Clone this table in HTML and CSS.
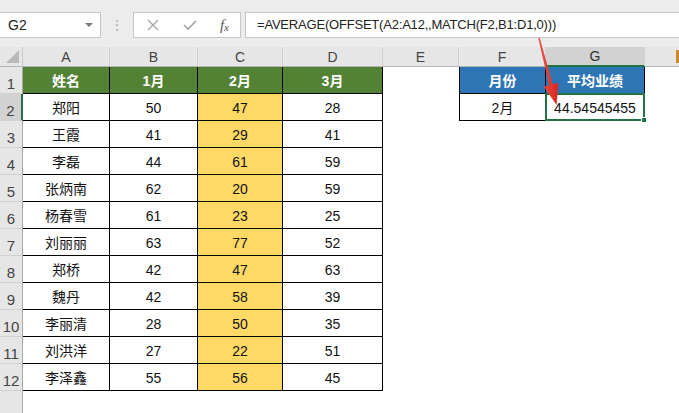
FILE: index.html
```html
<!DOCTYPE html>
<html lang="zh">
<head>
<meta charset="utf-8">
<title>Excel</title>
<link rel="stylesheet" href="styles.css">
</head>
<body>
<div class="app">
  <div class="fbar">
    <div class="namebox"><span>G2</span><span class="dd"></span></div>
    <div class="dots">⋮</div>
    <div class="btns">
      <svg class="ico" width="14" height="14" viewBox="0 0 14 14"><path d="M2 2 L12 12 M12 2 L2 12" stroke="#a6a6a6" stroke-width="1.4" fill="none"/></svg>
      <svg class="ico" width="16" height="14" viewBox="0 0 16 14"><path d="M2 7 L6 11 L14 3" stroke="#a6a6a6" stroke-width="1.6" fill="none"/></svg>
      <span class="fx">f<sub>x</sub></span>
    </div>
    <div class="formula">=AVERAGE(OFFSET(A2:A12,,MATCH(F2,B1:D1,0)))</div>
  </div>
  <div class="sheet">
    <div class="corner"><span class="tri"></span></div>
    <div class="ch">A</div><div class="ch">B</div><div class="ch">C</div><div class="ch">D</div><div class="ch">E</div><div class="ch">F</div><div class="ch chsel">G</div><div class="ch chlast"></div>

    <div class="rh">1</div>
    <div class="t g">姓名</div><div class="t g">1月</div><div class="t g">2月</div><div class="t g">3月</div>
    <div class="c"></div><div class="t tl b">月份</div><div class="t b">平均业绩</div><div class="c"></div>

    <div class="rh rhsel">2</div>
    <div class="t">郑阳</div><div class="t">50</div><div class="t y">47</div><div class="t">28</div>
    <div class="c"></div><div class="t tl">2月</div><div class="t sel">44.54545455<span class="handle"></span></div><div class="c"></div>

    <div class="rh">3</div>
    <div class="t">王霞</div><div class="t">41</div><div class="t y">29</div><div class="t">41</div>
    <div class="c"></div><div class="c"></div><div class="c"></div><div class="c"></div>

    <div class="rh">4</div>
    <div class="t">李磊</div><div class="t">44</div><div class="t y">61</div><div class="t">59</div>
    <div class="c"></div><div class="c"></div><div class="c"></div><div class="c"></div>

    <div class="rh">5</div>
    <div class="t">张炳南</div><div class="t">62</div><div class="t y">20</div><div class="t">59</div>
    <div class="c"></div><div class="c"></div><div class="c"></div><div class="c"></div>

    <div class="rh">6</div>
    <div class="t">杨春雪</div><div class="t">61</div><div class="t y">23</div><div class="t">25</div>
    <div class="c"></div><div class="c"></div><div class="c"></div><div class="c"></div>

    <div class="rh">7</div>
    <div class="t">刘丽丽</div><div class="t">63</div><div class="t y">77</div><div class="t">52</div>
    <div class="c"></div><div class="c"></div><div class="c"></div><div class="c"></div>

    <div class="rh">8</div>
    <div class="t">郑桥</div><div class="t">42</div><div class="t y">47</div><div class="t">63</div>
    <div class="c"></div><div class="c"></div><div class="c"></div><div class="c"></div>

    <div class="rh">9</div>
    <div class="t">魏丹</div><div class="t">42</div><div class="t y">58</div><div class="t">39</div>
    <div class="c"></div><div class="c"></div><div class="c"></div><div class="c"></div>

    <div class="rh">10</div>
    <div class="t">李丽清</div><div class="t">28</div><div class="t y">50</div><div class="t">35</div>
    <div class="c"></div><div class="c"></div><div class="c"></div><div class="c"></div>

    <div class="rh">11</div>
    <div class="t">刘洪洋</div><div class="t">27</div><div class="t y">22</div><div class="t">51</div>
    <div class="c"></div><div class="c"></div><div class="c"></div><div class="c"></div>

    <div class="rh">12</div>
    <div class="t">李泽鑫</div><div class="t">55</div><div class="t y">56</div><div class="t">45</div>
    <div class="c"></div><div class="c"></div><div class="c"></div><div class="c"></div>

    <div class="rh"></div>
    <div class="c"></div><div class="c"></div><div class="c"></div><div class="c"></div>
    <div class="c"></div><div class="c"></div><div class="c"></div><div class="c"></div>
  </div>
  <span class="hmark"></span>
  <svg class="arrow" width="679" height="413" viewBox="0 0 679 413">
    <defs>
      <linearGradient id="rg" x1="0" y1="0" x2="1" y2="0">
        <stop offset="0" stop-color="#f2524a"/>
        <stop offset="1" stop-color="#d8271f"/>
      </linearGradient>
    </defs>
    <polygon points="538.2,38 539.8,38 552.6,84.2 558.4,82.8 556.6,105 543.6,86.6 549.2,85.2" fill="url(#rg)"/>
  </svg>
</div>
</body>
</html>
```

FILE: styles.css
```css
* { box-sizing: border-box; }
html, body { margin: 0; padding: 0; }
body {
  width: 679px;
  height: 413px;
  overflow: hidden;
  background: #fff;
  font-family: "Liberation Sans", "Noto Sans CJK SC", sans-serif;
}
.app {
  position: relative;
  width: 679px;
  height: 413px;
  overflow: hidden;
}
.fbar {
  height: 47px;
  background: #ececec;
  display: flex;
  align-items: flex-start;
  padding-top: 12px;
}
.namebox {
  width: 101px;
  height: 26px;
  background: #fff;
  border: 1px solid #c6c6c6;
  border-left: none;
  display: flex;
  align-items: center;
  justify-content: space-between;
  padding: 0 7px 0 8px;
  font-size: 14px;
  color: #222;
}
.dd {
  width: 0;
  height: 0;
  border-left: 4px solid transparent;
  border-right: 4px solid transparent;
  border-top: 4px solid #7a7a7a;
}
.dots {
  width: 32px;
  text-align: center;
  color: #b0b0b0;
  font-size: 14px;
  line-height: 26px;
}
.btns {
  width: 108px;
  height: 26px;
  background: #fff;
  border: 1px solid #c6c6c6;
  display: flex;
  align-items: center;
  justify-content: space-between;
  padding: 0 11px 0 12px;
}
.fx {
  font-family: "Liberation Serif", serif;
  font-style: italic;
  font-size: 15px;
  color: #555;
}
.fx sub { font-size: 11px; vertical-align: -1px; }
.formula {
  flex: 1;
  margin-left: 4px;
  height: 26px;
  background: #fff;
  border: 1px solid #c6c6c6;
  border-right: none;
  padding-left: 11px;
  font-size: 13px;
  letter-spacing: -0.2px;
  line-height: 24px;
  color: #222;
  white-space: nowrap;
}
.sheet {
  display: grid;
  grid-template-columns: 23px 87px 88px 85px 100px 76px 87px 99px 1fr;
  grid-template-rows: 20px;
  grid-auto-rows: 27px;
}
.corner {
  background: #e6e6e6;
  border-right: 1px solid #c8c8c8;
  border-bottom: 1px solid #b5b5b5;
  position: relative;
}
.tri {
  position: absolute;
  right: 3px;
  bottom: 3px;
  width: 0;
  height: 0;
  border-left: 13px solid transparent;
  border-bottom: 13px solid #b9b9b9;
}
.ch {
  background: #e6e6e6;
  border-right: 1px solid #cfcfcf;
  border-bottom: 1px solid #b5b5b5;
  display: flex;
  align-items: flex-end;
  justify-content: center;
  font-size: 14px;
  color: #444;
  line-height: 17px;
}
.chsel {
  background: #d2d2d2;
  border-bottom: 2px solid #217346;
  color: #333;
}
.chlast { border-right: none; }
.rh {
  background: #e6e6e6;
  border-right: 1px solid #a8a8a8;
  border-bottom: 1px solid #d0d0d0;
  display: flex;
  align-items: flex-end;
  justify-content: center;
  font-size: 15px;
  color: #444;
  padding-bottom: 1px;
}
.rhsel {
  background: #d2d2d2;
  border-right: 2px solid #217346;
}
.c { background: #fff; }
.t {
  background: #fff;
  border-right: 1px solid #000;
  border-bottom: 1px solid #000;
  display: flex;
  align-items: flex-end;
  justify-content: center;
  padding-bottom: 3px;
  font-size: 14px;
  line-height: 17px;
  color: #111;
}
.tl { border-left: 1px solid #000; }
.g {
  background: #548235;
  color: #fff;
  font-weight: bold;
}
.b {
  background: #2e75b6;
  color: #fff;
  font-weight: bold;
}
.y { background: #ffd966; }
.sel {
  position: relative;
  border: 2px solid #217346;
  margin-left: -1px;
  margin-top: -1px;
  padding-bottom: 2px;
}
.handle {
  position: absolute;
  right: -4px;
  bottom: -4px;
  width: 6px;
  height: 6px;
  background: #217346;
  border: 1px solid #fff;
}
.hmark {
  position: absolute;
  left: 676px;
  top: 50px;
  width: 3px;
  height: 13px;
  background: #d08a2a;
}
.arrow {
  position: absolute;
  left: 0;
  top: 0;
  pointer-events: none;
}
```
